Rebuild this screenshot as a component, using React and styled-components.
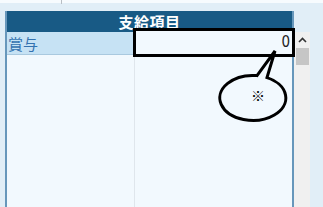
import React from 'react';
import styled, { createGlobalStyle } from 'styled-components';

const GlobalStyle = createGlobalStyle`
  html, body {
    margin: 0;
    padding: 0;
    background: #e1eef7;
    font-family: "Noto Sans CJK JP", "Noto Sans", sans-serif;
    overflow: hidden;
  }
`;

const Page = styled.div`
  position: relative;
  width: 323px;
  height: 207px;
  overflow: hidden;
  background: #e1eef7;
`;

const TopStrip = styled.div`
  height: 3px;
  background: #f7fbfe;
  display: flex;
  padding-left: 61px;
`;

const Tick = styled.div`
  width: 1px;
  height: 4px;
  background: #b8bec4;
`;

const Frame = styled.div`
  display: flex;
  margin-top: 8px;
  margin-left: 5px;
`;

const Panel = styled.div`
  width: 285px;
  height: 200px;
  border-left: 2px solid #6797bb;
  border-right: 2px solid #6797bb;
  background: #f2f9fe;
  display: flex;
  flex-direction: column;
`;

const Header = styled.div`
  height: 21px;
  background: #185a85;
  color: #ffffff;
  font-weight: bold;
  font-size: 15px;
  line-height: 21px;
  text-align: center;
  letter-spacing: 0.5px;
`;

const Body = styled.div`
  flex: 1;
  display: grid;
  grid-template-columns: 128px 1fr;
  grid-template-rows: 23px 1fr;
`;

const Cell = styled.div`
  background: ${({ $selected }) => ($selected ? '#c6e2f4' : '#f2f9fe')};
  border-bottom: ${({ $selected }) => ($selected ? '1px solid #a9c9df' : 'none')};
  border-right: ${({ $divider }) => ($divider ? '1px solid #dfe6ec' : 'none')};
  color: #3372b0;
  font-size: 15px;
  line-height: 23px;
  padding-left: 1px;
`;

const Scrollbar = styled.div`
  margin-top: 21px;
  width: 16px;
  height: 180px;
  background: #f0f0f0;
  display: flex;
  flex-direction: column;
  align-items: center;
`;

const Arrow = styled.div`
  height: 16px;
  width: 16px;
  display: flex;
  align-items: center;
  justify-content: center;
`;

const Thumb = styled.div`
  width: 13px;
  height: 17px;
  background: #c6c6c6;
`;

const ValueBox = styled.div`
  position: absolute;
  left: 133px;
  top: 28px;
  width: 154px;
  height: 23px;
  border: 3px solid #000;
  background: #f2f9fe;
  font-family: "DejaVu Sans Condensed", "Liberation Sans", sans-serif;
  font-size: 15px;
  line-height: 23px;
  text-align: right;
  padding-right: 2px;
  box-sizing: content-box;
  color: #222;
`;

const Bubble = styled.svg`
  position: absolute;
  left: 210px;
  top: 45px;
`;

const Mark = styled.div`
  position: absolute;
  left: 251px;
  top: 87px;
  font-size: 14px;
  line-height: 16px;
  font-weight: bold;
  color: #000;
`;

export default function App() {
  return (
    <Page>
      <GlobalStyle />
      <TopStrip>
        <Tick />
      </TopStrip>
      <Frame>
        <Panel>
          <Header>支給項目</Header>
          <Body>
            <Cell $selected $divider>賞与</Cell>
            <Cell $selected />
            <Cell $divider />
            <Cell />
          </Body>
        </Panel>
        <Scrollbar>
          <Arrow>
            <svg width="9" height="6" viewBox="0 0 9 6">
              <path d="M1 5 L4.5 1.5 L8 5" fill="none" stroke="#333" strokeWidth="1.6" />
            </svg>
          </Arrow>
          <Thumb />
        </Scrollbar>
      </Frame>
      <ValueBox>0</ValueBox>
      <Bubble width="84" height="82" viewBox="0 0 84 82">
        <path
          d="M47 30.6 L65 6 L57 32.6 A33 22.5 0 1 1 47 30.6 Z"
          fill="#f2f9fe"
          stroke="#000"
          strokeWidth="3"
          strokeLinejoin="miter"
        />
      </Bubble>
      <Mark>※</Mark>
    </Page>
  );
}
